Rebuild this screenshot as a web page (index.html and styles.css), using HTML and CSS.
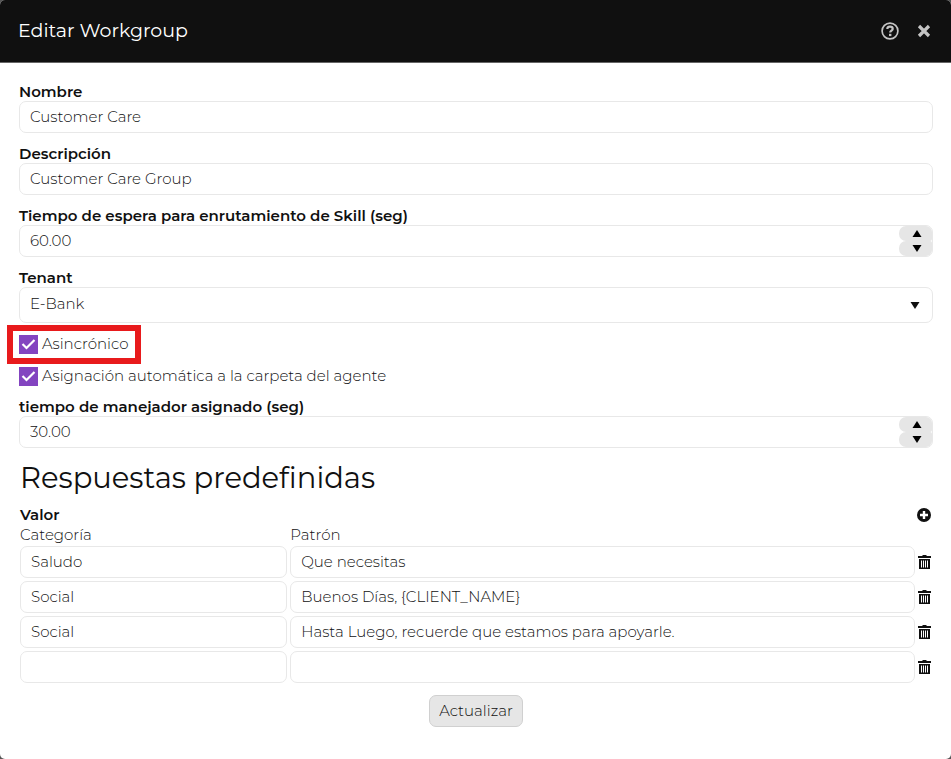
FILE: index.html
```
<!DOCTYPE html>
<html lang="es">
<head>
    <meta charset="UTF-8">
    <meta name="viewport" content="width=device-width, initial-scale=1.0">
    <title>Editar Workgroup</title>
    <link rel="stylesheet" href="styles.css">
</head>
<body>
    <svg class="sprite" aria-hidden="true">
        <symbol id="icon-trash" viewBox="0 0 13 14">
            <path fill="#101010" d="M4.500 0h4v1h4.500v2H0V1h4.500z"/>
            <path fill="#101010" fill-rule="evenodd" d="M1 4h11v10H1zM3 5.500v7h1v-7zM5 5.500v7h1v-7zM7 5.500v7h1v-7zM9 5.500v7h1v-7z"/>
        </symbol>
    </svg>
    <div class="dialog" role="dialog" aria-labelledby="dialog-title">
        <header class="dialog-header">
            <h1 id="dialog-title">Editar Workgroup</h1>
            <button type="button" class="icon-button" aria-label="Ayuda">
                <svg width="18" height="18" viewBox="0 0 18 18">
                    <circle cx="9" cy="9" r="7.900" fill="none" stroke="#c4c4c4" stroke-width="1.700"/>
                    <path d="M6.300 7C6.400 5.500 7.500 4.700 9 4.700S11.700 5.600 11.700 6.900C11.700 8.600 9.200 8.700 9.200 10.600" fill="none" stroke="#c4c4c4" stroke-width="2.200"/>
                    <rect x="8" y="11.800" width="2.400" height="2.300" fill="#c4c4c4"/>
                </svg>
            </button>
            <button type="button" class="icon-button" aria-label="Cerrar">
                <svg width="14" height="14" viewBox="0 0 14 14">
                    <path d="M2 2l10 10M12 2L2 12" stroke="#c4c4c4" stroke-width="3.200"/>
                </svg>
            </button>
        </header>

        <form class="dialog-body" id="workgroupForm">
            <div class="field">
                <label for="nombre">Nombre</label>
                <input type="text" class="control" id="nombre" name="nombre" value="Customer Care">
            </div>
            <div class="field">
                <label for="descripcion">Descripción</label>
                <input type="text" class="control" id="descripcion" name="descripcion" value="Customer Care Group">
            </div>
            <div class="field">
                <label for="espera">Tiempo de espera para enrutamiento de Skill (seg)</label>
                <div class="spinner">
                    <input type="text" inputmode="decimal" id="espera" name="espera" value="60.00">
                    <div class="spinner-buttons">
                        <button type="button" aria-label="Aumentar"><svg width="10" height="7" viewBox="0 0 10 7"><path d="M5 0l4.500 7h-9z"/></svg></button>
                        <button type="button" aria-label="Disminuir"><svg width="10" height="7" viewBox="0 0 10 7"><path d="M5 7l4.500-7h-9z"/></svg></button>
                    </div>
                </div>
            </div>
            <div class="field">
                <label for="tenant">Tenant</label>
                <select class="control" id="tenant" name="tenant">
                    <option>E-Bank</option>
                </select>
            </div>

            <div class="checks">
                <label class="check highlighted"><input type="checkbox" name="asincronico" checked>Asincrónico</label>
                <label class="check"><input type="checkbox" name="asignacion" checked>Asignación automática a la carpeta del agente</label>
            </div>

            <div class="field">
                <label for="manejador">tiempo de manejador asignado (seg)</label>
                <div class="spinner">
                    <input type="text" inputmode="decimal" id="manejador" name="manejador" value="30.00">
                    <div class="spinner-buttons">
                        <button type="button" aria-label="Aumentar"><svg width="10" height="7" viewBox="0 0 10 7"><path d="M5 0l4.500 7h-9z"/></svg></button>
                        <button type="button" aria-label="Disminuir"><svg width="10" height="7" viewBox="0 0 10 7"><path d="M5 7l4.500-7h-9z"/></svg></button>
                    </div>
                </div>
            </div>

            <section class="responses">
                <h2>Respuestas predefinidas</h2>
                <div class="responses-header">
                    <h3>Valor</h3>
                    <button type="button" class="icon-button" aria-label="Agregar">
                        <svg width="14" height="14" viewBox="0 0 14 14">
                            <circle cx="7" cy="7" r="7" fill="#101010"/>
                            <path d="M7 3v8M3 7h8" stroke="#fff" stroke-width="2.400"/>
                        </svg>
                    </button>
                </div>
                <table>
                    <thead>
                        <tr>
                            <th class="col-category" id="categoria">Categoría</th>
                            <th id="patron">Patrón</th>
                            <td class="col-action"></td>
                        </tr>
                    </thead>
                    <tbody>
                        <tr>
                            <td><input type="text" class="control" aria-labelledby="categoria" value="Saludo"></td>
                            <td><input type="text" class="control" aria-labelledby="patron" value="Que necesitas"></td>
                            <td><button type="button" class="icon-button" aria-label="Eliminar"><svg width="13" height="14"><use href="#icon-trash"/></svg></button></td>
                        </tr>
                        <tr>
                            <td><input type="text" class="control" aria-labelledby="categoria" value="Social"></td>
                            <td><input type="text" class="control" aria-labelledby="patron" value="Buenos Días, {CLIENT_NAME}"></td>
                            <td><button type="button" class="icon-button" aria-label="Eliminar"><svg width="13" height="14"><use href="#icon-trash"/></svg></button></td>
                        </tr>
                        <tr>
                            <td><input type="text" class="control" aria-labelledby="categoria" value="Social"></td>
                            <td><input type="text" class="control" aria-labelledby="patron" value="Hasta Luego, recuerde que estamos para apoyarle."></td>
                            <td><button type="button" class="icon-button" aria-label="Eliminar"><svg width="13" height="14"><use href="#icon-trash"/></svg></button></td>
                        </tr>
                        <tr>
                            <td><input type="text" class="control" aria-labelledby="categoria"></td>
                            <td><input type="text" class="control" aria-labelledby="patron"></td>
                            <td><button type="button" class="icon-button" aria-label="Eliminar"><svg width="13" height="14"><use href="#icon-trash"/></svg></button></td>
                        </tr>
                    </tbody>
                </table>
            </section>

            <div class="actions">
                <button type="submit" class="submit">Actualizar</button>
            </div>
        </form>
    </div>
</body>
</html>
```
FILE: styles.css
```
* {
    box-sizing: border-box;
}
body {
    margin: 0;
    background-color: #555555;
    color: #101010;
    font-family: Montserrat, Inter, sans-serif;
    font-size: 15px;
    line-height: 20px;
}
h1, h2, h3 {
    margin: 0;
}
input, select, button {
    font: inherit;
    color: inherit;
}
button {
    cursor: pointer;
}
.sprite {
    display: none;
}
.dialog {
    min-height: 100vh;
    background-color: #ffffff;
    border-radius: 5px;
    overflow: hidden;
}
.dialog-header {
    display: flex;
    align-items: center;
    gap: 18px;
    height: 63px;
    padding: 0 20px 0 18px;
    background-color: #101010;
    border-bottom: 1px solid #666666;
    color: #ffffff;
}
.dialog-header h1 {
    flex: 1;
    font-size: 19px;
    font-weight: 400;
}
.icon-button {
    display: flex;
    padding: 0;
    border: none;
    background: none;
}
.dialog-body {
    padding: 18px 18px 32px 19px;
}
.field {
    margin-bottom: 10px;
}
.field label {
    display: block;
    padding-top: 2px;
    font-weight: 600;
    line-height: 18px;
}
.control, .spinner {
    display: block;
    width: 100%;
    height: 32px;
    padding: 0 10px 2px;
    border: 1px solid #e8e8e8;
    border-radius: 7px;
    background-color: #ffffff;
    color: #101010;
    font-weight: 300;
}
select.control {
    height: 36px;
    appearance: none;
    background-image: url("data:image/svg+xml,%3Csvg xmlns='http://www.w3.org/2000/svg' width='10' height='7'%3E%3Cpath d='M5 7l4.500-7h-9z' fill='%23101010'/%3E%3C/svg%3E");
    background-repeat: no-repeat;
    background-position: right 12px center;
}
.spinner {
    display: flex;
    padding: 0;
    overflow: hidden;
}
.spinner input {
    flex: 1;
    min-width: 0;
    padding: 0 10px;
    border: none;
    background: none;
}
.spinner-buttons {
    display: flex;
    flex-direction: column;
    width: 33px;
}
.spinner-buttons button {
    display: flex;
    flex: 1;
    align-items: center;
    justify-content: center;
    padding: 0 0 0 3px;
    border: none;
    border-radius: 7px 2px 2px 7px;
    background-color: #e6e6e6;
}
.checks {
    display: flex;
    flex-direction: column;
    align-items: flex-start;
    gap: 12px;
    margin-bottom: 10px;
    padding-top: 1px;
}
.check {
    display: flex;
    align-items: center;
    gap: 4px;
    font-weight: 300;
}
.check input {
    width: 19px;
    height: 19px;
    margin: 0;
    appearance: none;
    background: #ffffff;
    border: 1px solid #8344c0;
}
.check input:checked {
    background: #8344c0 url("data:image/svg+xml,%3Csvg xmlns='http://www.w3.org/2000/svg' width='17' height='17'%3E%3Cpath d='M2.500 8l4 4L14.500 4' fill='none' stroke='white' stroke-width='2.200'/%3E%3C/svg%3E") center no-repeat;
}
.highlighted {
    position: relative;
}
.highlighted::after {
    content: "";
    position: absolute;
    inset: -9px -12px -10px -12px;
    border: 6px solid #e81a1c;
}
.responses {
    padding-left: 1px;
}
.responses h2 {
    margin-bottom: 8px;
    font-size: 29px;
    font-weight: 400;
    line-height: 39px;
}
.responses-header {
    display: flex;
    align-items: center;
    justify-content: space-between;
    padding-right: 2px;
}
.responses h3 {
    font-size: 15px;
    font-weight: 600;
}
table {
    width: 100%;
    border-collapse: collapse;
    table-layout: fixed;
}
th, td {
    padding: 0 3px 3px 0;
}
th {
    padding-bottom: 1px;
    font-weight: 300;
    text-align: left;
}
.col-category {
    width: 29.6%;
}
.col-action {
    width: 15px;
}
td:last-child {
    padding-right: 0;
}
.actions {
    display: flex;
    justify-content: center;
    padding-top: 9px;
}
.submit {
    height: 32px;
    padding: 0 9px;
    border: 1px solid #d0d0d0;
    border-radius: 7px;
    background-color: #e6e6e6;
    font-weight: 300;
}
```
